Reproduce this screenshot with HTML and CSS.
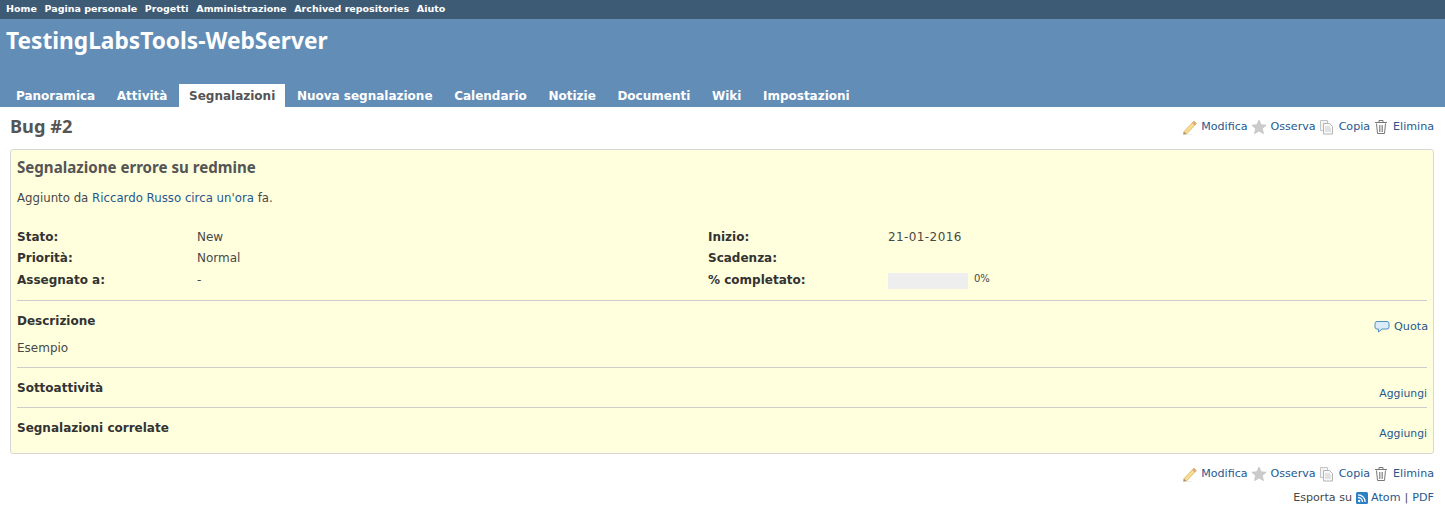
FILE: index.html
```html
<!DOCTYPE html>
<html lang="it">
<head>
<meta charset="utf-8">
<title>Bug #2</title>
<link rel="stylesheet" href="styles.css">
</head>
<body>
<svg class="defs" width="0" height="0" aria-hidden="true">
  <defs>
    <symbol id="i-edit" viewBox="0 0 16 16">
      <g transform="translate(1 0)">
        <path d="M2 12.500 12 2 14.500 4.500 4.500 15 1.500 15.500Z" fill="#f6dc92" stroke="#d8b766" stroke-width=".8"/>
        <path d="M11 3.200 13.500 5.700" stroke="#e6a07f" stroke-width="2"/>
        <path d="M2 12.800 1.500 15.500 4.200 15Z" fill="#a08d6c"/>
        <path d="M1 15.700H10" stroke="#ddd" stroke-width=".6"/>
      </g>
    </symbol>
    <symbol id="i-star" viewBox="0 0 16 16">
      <path d="M8 1 10.100 5.700 15.200 6.200 11.400 9.600 12.500 14.700 8 12 3.500 14.700 4.600 9.600 .8 6.200 5.900 5.700Z" fill="#cbcbcb" stroke="#bcbcbc" stroke-width=".6"/>
    </symbol>
    <symbol id="i-copy" viewBox="0 0 16 16">
      <path d="M1.500 1.500H8.500V11.500H1.500Z" fill="#f4f4f4" stroke="#c4c4c4"/>
      <path d="M4.500 4.500H10.500L13.500 7.500V15H4.500Z" fill="#fafafa" stroke="#b4b4b4"/>
      <path d="M6 8H11M6 10H12M6 12H12" stroke="#cacaca"/>
    </symbol>
    <symbol id="i-del" viewBox="0 0 16 16">
      <path d="M2 3.500H14M6 3.500V1.500H10V3.500" fill="none" stroke="#777"/>
      <path d="M3.500 4.500 4.500 14.500H11.500L12.500 4.500" fill="none" stroke="#777"/>
      <path d="M6.500 6V13M8 6V13M9.500 6V13" stroke="#999"/>
    </symbol>
    <symbol id="i-quote" viewBox="0 0 16 16">
      <path d="M3 2.500H13Q15 2.500 15 4.500V8Q15 10 13 10H8L4.500 13V10H3Q1 10 1 8V4.500Q1 2.500 3 2.500Z" fill="#dcebf8" stroke="#4f8fc4"/>
    </symbol>
    <symbol id="i-feed" viewBox="0 0 12 12">
      <rect width="12" height="12" rx="1.500" fill="#2b7fc3"/>
      <circle cx="3.200" cy="9" r="1.200" fill="#fff"/>
      <path d="M2 5.500A4.500 4.500 0 0 1 6.500 10M2 2.800A7.200 7.200 0 0 1 9.200 10" fill="none" stroke="#fff" stroke-width="1.300"/>
    </symbol>
  </defs>
</svg>

<nav class="top-menu">
  <a href="#">Home</a><a href="#">Pagina personale</a><a href="#">Progetti</a><a href="#">Amministrazione</a><a href="#">Archived repositories</a><a href="#">Aiuto</a>
</nav>

<header class="header">
  <h1 class="site-title">TestingLabsTools-WebServer</h1>
  <ul class="tabs">
    <li><a href="#">Panoramica</a></li>
    <li><a href="#">Attività</a></li>
    <li><a href="#" class="selected">Segnalazioni</a></li>
    <li><a href="#">Nuova segnalazione</a></li>
    <li><a href="#">Calendario</a></li>
    <li><a href="#">Notizie</a></li>
    <li><a href="#">Documenti</a></li>
    <li><a href="#">Wiki</a></li>
    <li><a href="#">Impostazioni</a></li>
  </ul>
</header>

<main class="content">
  <div class="title-row">
    <h2 class="page-title">Bug #2</h2>
    <div class="actions actions-top">
      <a href="#" class="action"><svg class="icon"><use href="#i-edit"/></svg>Modifica</a>
      <a href="#" class="action"><svg class="icon"><use href="#i-star"/></svg>Osserva</a>
      <a href="#" class="action"><svg class="icon"><use href="#i-copy"/></svg>Copia</a>
      <a href="#" class="action"><svg class="icon"><use href="#i-del"/></svg>Elimina</a>
    </div>
  </div>

  <section class="issue">
    <h3 class="subject">Segnalazione errore su redmine</h3>
    <p class="author">Aggiunto da <a href="#">Riccardo Russo</a> <a href="#">circa un'ora</a> fa.</p>

    <div class="attrs">
      <div class="attr-col attr-left">
        <div class="attr"><b>Stato:</b><span>New</span></div>
        <div class="attr"><b>Priorità:</b><span>Normal</span></div>
        <div class="attr"><b>Assegnato a:</b><span>-</span></div>
      </div>
      <div class="attr-col attr-right">
        <div class="attr"><b>Inizio:</b><span class="date">21-01-2016</span></div>
        <div class="attr"><b>Scadenza:</b><span></span></div>
        <div class="attr"><b>% completato:</b><span class="progress-cell"><i class="progress"></i><small class="pct">0%</small></span></div>
      </div>
    </div>

    <hr class="rule">
    <div class="block block-desc">
      <h4>Descrizione</h4>
      <a href="#" class="action"><svg class="icon"><use href="#i-quote"/></svg>Quota</a>
    </div>
    <p class="desc">Esempio</p>
    <hr class="rule">
    <div class="block">
      <h4>Sottoattività</h4>
      <a href="#" class="add">Aggiungi</a>
    </div>
    <hr class="rule">
    <div class="block">
      <h4>Segnalazioni correlate</h4>
      <a href="#" class="add">Aggiungi</a>
    </div>
  </section>

  <div class="actions actions-bottom">
    <a href="#" class="action"><svg class="icon"><use href="#i-edit"/></svg>Modifica</a>
    <a href="#" class="action"><svg class="icon"><use href="#i-star"/></svg>Osserva</a>
    <a href="#" class="action"><svg class="icon"><use href="#i-copy"/></svg>Copia</a>
    <a href="#" class="action"><svg class="icon"><use href="#i-del"/></svg>Elimina</a>
  </div>
  <p class="export"><span>Esporta su</span><a href="#" class="atom"><svg class="feed"><use href="#i-feed"/></svg>Atom</a><span>|</span><a href="#">PDF</a></p>
</main>
</body>
</html>
```

FILE: styles.css
```css
* { box-sizing: border-box; }
html, body { margin: 0; padding: 0; }
body {
  background: #fff;
  color: #484848;
  font: 12px/16px "DejaVu Sans", Verdana, sans-serif;
  overflow: hidden;
}
a { color: #26588f; text-decoration: none; }
.defs { position: absolute; }

.top-menu {
  display: flex;
  gap: 7.700px;
  height: 19px;
  padding: 0 6px;
  background: #3e5b76;
  font-size: 9.500px;
  font-weight: 700;
  line-height: 17px;
}
.top-menu a { color: #fff; }

.header {
  height: 88px;
  padding: 9px 6px 0;
  background: #628db6;
  display: flex;
  flex-direction: column;
  justify-content: space-between;
}
.site-title {
  margin: 0;
  color: #fff;
  font: 700 22.700px/26px "Noto Sans", "Open Sans", sans-serif;
}
.tabs {
  display: flex;
  margin: 0;
  padding: 0;
  list-style: none;
  gap: 1.600px;
}
.tabs a {
  display: block;
  height: 23px;
  padding: 4px 10px 0;
  color: #fff;
  font-size: 12px;
  font-weight: 700;
  line-height: 16px;
}
.tabs a.selected { background: #fff; color: #555; }

.content { padding: 0 11px 0 10px; }
.title-row {
  display: flex;
  justify-content: space-between;
  height: 42px;
}
.page-title {
  margin: 7px 0 0;
  color: #555;
  font: 700 18.200px/24px "Noto Sans", sans-serif;
}
.actions {
  display: flex;
  justify-content: flex-end;
  align-items: center;
  gap: 3px;
  height: 38px;
  font-size: 11.100px;
}
.actions-top { height: 39px; padding-top: 1px; }
.action { display: inline-flex; align-items: center; }
.icon { width: 16px; height: 16px; margin-right: 4px; }

.issue {
  height: 305px;
  padding: 8px 6px 0;
  background: #ffd;
  border: 1px solid #d7d7d7;
  border-radius: 3px;
}
.subject {
  margin: 0;
  color: #555;
  font: 700 15.100px/18px "Noto Sans", sans-serif;
}
.author { margin: 14px 0 0; font-size: 11.750px; line-height: 16px; }
.attrs { display: flex; margin-top: 23px; }
.attr-left { width: 691px; }
.attr-col { display: flex; flex-direction: column; }
.attr { display: flex; height: 21.400px; align-items: flex-start; }
.attr b { width: 180px; color: #333; font-size: 12px; }
.date { letter-spacing: .4px; }
.progress-cell { display: flex; align-items: flex-start; padding-top: 1px; }
.progress { display: block; width: 80px; height: 16px; background: #eee; }
.pct { margin-left: 6px; font-size: 10px; line-height: 12px; }

.rule { height: 1px; margin: 0; border: 0; background: #ccc; }
.attrs + .rule { margin-top: 6.800px; }
.block {
  display: flex;
  justify-content: space-between;
  height: 39px;
  padding-top: 12px;
}
.block h4 { margin: 0; color: #333; font-size: 12px; line-height: 16px; font-weight: 700; }
.block .add { margin: 6px 0 0; font-size: 10.800px; line-height: 16px; }
.block-desc .action { margin: 1px -1px 0 0; font-size: 11.200px; }
.desc { margin: 0 0 11px; font-size: 12px; line-height: 16px; }

.actions-bottom { height: 37px; padding-top: 3px; }
.export {
  display: flex;
  justify-content: flex-end;
  align-items: center;
  gap: 4px;
  margin: 0;
  font-size: 11.150px;
  line-height: 14px;
}
.atom { display: flex; align-items: center; }
.feed { width: 12px; height: 12px; margin-right: 3px; }
```
